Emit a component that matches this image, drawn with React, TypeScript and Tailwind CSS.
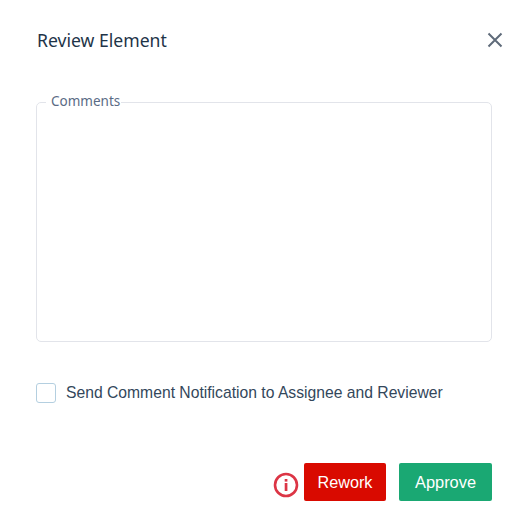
export default function App() {
  return (
    <div className="w-[525px] h-[519px] bg-white flex flex-col pl-[36px] pr-[22px] pt-[28px] font-['Liberation_Sans',sans-serif]">
      <div className="flex items-center justify-between h-[24px] pl-[1px]">
        <h2 className="font-['Noto_Sans',sans-serif] text-[17.6px] font-normal leading-[24px] text-[#1e3448]">Review Element</h2>
        <svg width="16" height="16" viewBox="0 0 16 16" className="text-[#5f6b7a]" fill="none" stroke="currentColor" strokeWidth="2">
          <path d="M1.5 1.5 14.5 14.5M14.5 1.5 1.5 14.5" />
        </svg>
      </div>
      <fieldset className="mt-[41px] w-[456px] h-[249px] border border-[#e2e4ea] rounded-[5px] pl-[9px] m-0">
        <legend className="pl-[5px] pr-[1px] font-['Noto_Sans',sans-serif] text-[13.5px] leading-[18px] text-[#5a6b85]">
          <span className="block -translate-y-[1px]">Comments</span>
        </legend>
      </fieldset>
      <label className="mt-[41px] flex items-center h-[20px]">
        <span className="w-[20px] h-[20px] border border-[#b4cfe0] rounded-[3px] bg-white" />
        <span className="ml-[10px] text-[15.7px] text-[#33475b]">Send Comment Notification to Assignee and Reviewer</span>
      </label>
      <div className="mt-[60px] flex items-center justify-end w-[456px]">
        <svg width="26" height="26" viewBox="0 0 26 26" fill="none" className="mr-[5px] mt-[6px]">
          <circle cx="13" cy="13" r="11" stroke="#dc3545" strokeWidth="2.6" />
          <rect x="11.7" y="11" width="2.7" height="8" fill="#dc3545" />
          <rect x="11.7" y="7" width="2.7" height="2.6" fill="#dc3545" />
        </svg>
        <button className="w-[82px] h-[38px] bg-[#d90a00] rounded-[2px] text-white text-[16.2px]">Rework</button>
        <button className="ml-[13px] w-[93px] h-[38px] bg-[#1aa873] rounded-[2px] text-white text-[16.4px]">Approve</button>
      </div>
    </div>
  );
}
